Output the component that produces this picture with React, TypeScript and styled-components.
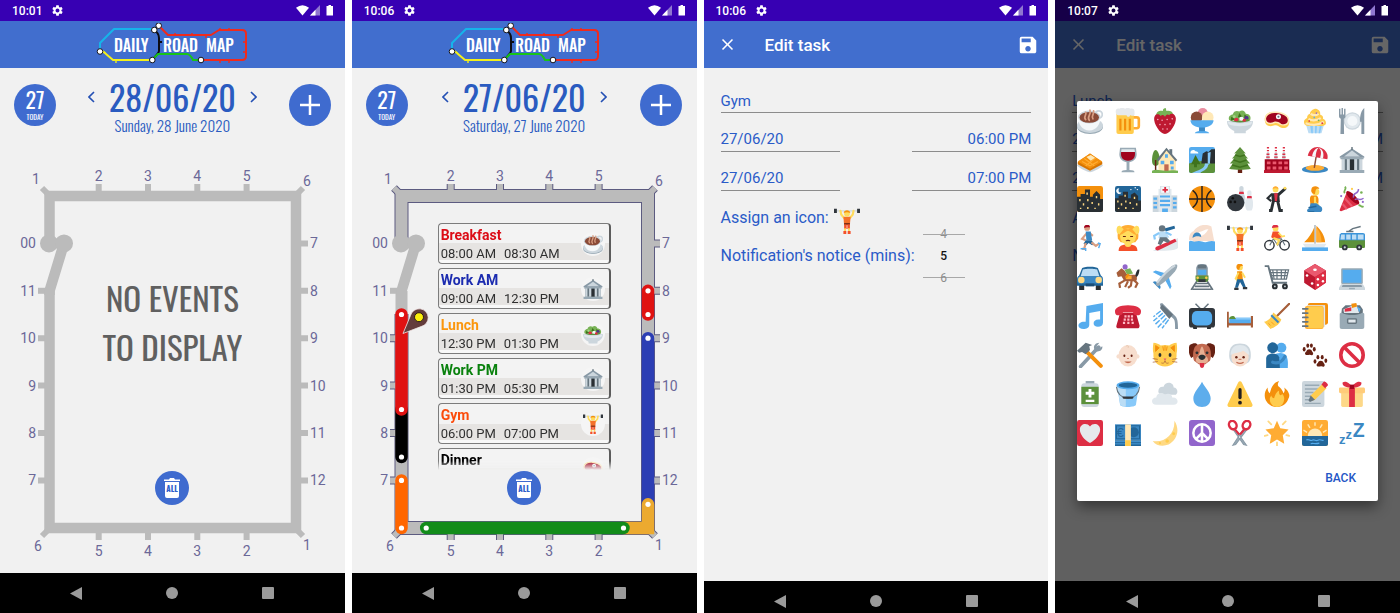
import React from 'react';
import styled, { createGlobalStyle } from 'styled-components';
import { MdSettings, MdSave, MdClose } from 'react-icons/md';

const GlobalStyle = createGlobalStyle`
  *, *::before, *::after { box-sizing: border-box; }
  body { margin: 0; background: #fff; font-family: Roboto, "Liberation Sans", sans-serif; }
  button { border: 0; padding: 0; margin: 0; background: none; font: inherit; color: inherit; cursor: pointer; }
  input { margin: 0; border-radius: 0; }
  svg { display: block; }
`;

const narrow = '"Oswald", "Roboto Condensed", "Liberation Sans Narrow", "Liberation Sans", sans-serif';

/* ---------- emoji drawings, all on a 36 unit square ---------- */

const art: Record<string, React.ReactNode> = {
  coffee: (
    <>
      <ellipse cx="18" cy="26" rx="18" ry="10" fill="#99AAB5" />
      <ellipse cx="18" cy="24.5" rx="18" ry="10" fill="#CCD6DD" />
      <circle cx="30" cy="9" r="5" fill="none" stroke="#CCD6DD" strokeWidth="2.5" />
      <path d="M2 12h30c1 10-5 19-15 19S1 22 2 12z" fill="#F5F8FA" />
      <ellipse cx="17" cy="12.5" rx="15.5" ry="9" fill="#CCD6DD" />
      <ellipse cx="17" cy="13" rx="13.5" ry="7.4" fill="#8A4B38" />
      <path d="M12 16c-4-4 2-6 0-10M17 17c-4-5 3-7 1-14M22 15c-3-4 2-6 1-11" fill="none" stroke="#D99E82" strokeWidth="2.4" strokeLinecap="round" />
    </>
  ),
  beer: (
    <>
      <path d="M25 13h5c3 0 3 2 3 3v9c0 2-1 3-3 3h-5" fill="none" stroke="#FFAC33" strokeWidth="3.6" />
      <path d="M2 6h24v27c0 2-1 3-3 3H5c-2 0-3-1-3-3z" fill="#FFCC4D" />
      <path d="M6 15h3v16H6zM12.500 15h3v16h-3zM19 15h3v16h-3z" fill="#F4900C" />
      <path d="M1 5c0-3 2-5 5-4 3-2 6-1 8 0 3-2 6-1 7 0 4-1 6 1 6 4v5c-3 2-5 0-6 0-1 3-4 3-5 0H4c-2 0-3-2-3-5z" fill="#E6E9EC" />
    </>
  ),
  strawberry: (
    <>
      <path d="M3 14C4 7 11 5 18 6c7-1 14 1 15 8 1 8-8 22-15 22S2 22 3 14z" fill="#BE1931" />
      <path d="M6 9c0-4 5-6 9-5 0-3 2-4 4-4l1 4c5-1 8 1 9 4-3 0-4 0-5 2-3-2-4-1-6 2-2-3-4-3-6-1-2-2-3-3-6-2z" fill="#77B255" />
      <g fill="#F4ABBA"><circle cx="8" cy="16" r="1.100" /><circle cx="14" cy="17" r="1.100" /><circle cx="21" cy="16" r="1.100" /><circle cx="28" cy="15" r="1.100" /><circle cx="11" cy="23" r="1.100" /><circle cx="18" cy="23" r="1.100" /><circle cx="25" cy="22" r="1.100" /><circle cx="15" cy="29" r="1.100" /><circle cx="21" cy="29" r="1.100" /></g>
    </>
  ),
  icecream: (
    <>
      <circle cx="19" cy="7" r="7" fill="#EA8DA0" />
      <circle cx="10.500" cy="13" r="8" fill="#8A4B38" />
      <circle cx="26" cy="13" r="8" fill="#FFE8B6" />
      <path d="M2 17h32c0 5-5 9-12 10v5c4 1 6 2 6 3H8c0-1 2-2 6-3v-5C7 26 2 22 2 17z" fill="#55ACEE" />
      <path d="M14 27h8v5h-8z" fill="#3B88C3" />
    </>
  ),
  salad: (
    <>
      <path d="M3 17C1 12 5 9 8 9c1-5 6-6 9-4 4-3 8-1 9 3 5 0 8 4 6 9z" fill="#77B255" />
      <path d="M6 12l6 4-7 2zM17 7l4 5-6 1zM24 9l5 3-5 2z" fill="#3E721D" />
      <circle cx="10" cy="12" r="2" fill="#A6D388" /><circle cx="27" cy="14" r="3" fill="#50318a" />
      <circle cx="13" cy="17" r="3" fill="#DD2E44" /><circle cx="20" cy="15" r="3" fill="#F5F8FA" /><circle cx="24" cy="18" r="2.500" fill="#DD2E44" />
      <path d="M0 18h36c0 7-4 11-10 14v3H10v-3C4 29 0 25 0 18z" fill="#CCD6DD" />
      <path d="M1 18c3 4 31 4 34 0 0 2-1 4-2 5-8 3-22 3-30 0-1-1-2-3-2-5z" fill="#E1E8ED" />
      <path d="M4 17c5 4 23 4 28 0l-5-2-4 3-8-1-4 1z" fill="#5C913B" />
      <circle cx="13" cy="16" r="2.600" fill="#DD2E44" /><circle cx="24" cy="17" r="2.200" fill="#DD2E44" />
    </>
  ),
  meat: (
    <>
      <path d="M1 16C1 8 8 4 17 6c8 1 18 4 18 13 0 8-6 10-12 8-3-2-5-4-8-3C7 27 1 24 1 16z" fill="#FFCC4D" />
      <path d="M1 15C2 7 9 4 17 5c9 1 18 4 18 12 0 7-6 8-11 7-4-2-6-4-9-3C7 24 1 22 1 15z" fill="#FFE8B6" />
      <path d="M3 14c1-5 7-8 14-7 8 1 16 4 16 10 0 5-5 6-9 5-4-3-7-4-10-3-6 3-12 1-11-5z" fill="#A0041E" />
      <circle cx="20" cy="12" r="3.500" fill="#F5F8FA" /><circle cx="20" cy="12" r="1.400" fill="#66757F" />
    </>
  ),
  cupcake: (
    <>
      <path d="M5 21h26l-4 14H9z" fill="#BDDDF4" />
      <path d="M11 22l2 13h2V22zM18 22v13h2l1-13zM25 22l-2 13h2l3-13z" fill="#88C9F9" />
      <path d="M3 21c-1-5 3-6 4-7 0-4 2-5 4-6 0-4 5-7 8-7 5 1 7 5 6 8 3 1 5 3 4 6 3 1 5 4 4 7-2 3-6 3-15 3S4 25 3 21z" fill="#FFCC4D" />
      <path d="M9 15c5 3 12 2 17-1M12 8c4 3 8 2 11 0M5 21c8 3 18 3 25-2" fill="none" stroke="#FFE8B6" strokeWidth="3" />
      <g><circle cx="10" cy="18" r="1.200" fill="#DD2E44" /><circle cx="17" cy="13" r="1.200" fill="#55ACEE" /><circle cx="23" cy="17" r="1.200" fill="#77B255" /><circle cx="20" cy="7" r="1.200" fill="#9266CC" /><circle cx="28" cy="21" r="1.200" fill="#DD2E44" /></g>
    </>
  ),
  plate: (
    <>
      <circle cx="18.500" cy="18" r="12" fill="#CCD6DD" /><circle cx="18.500" cy="18" r="10.500" fill="#E1E8ED" /><circle cx="18.500" cy="18" r="7" fill="#F5F8FA" />
      <path d="M0 1h2v8h1.500V0h2v9H7V1h2v10c0 2-1 3-2.300 4L7 36H2l.5-21C1 14 0 13 0 11zM35 0v36h-4V19h-2C29 10 31 3 35 0z" fill="#8899A6" />
    </>
  ),
  waffle: (
    <>
      <path d="M0 25l17-8 19 8c0 3-15 10-18 10S0 28 0 25z" fill="#CCD6DD" />
      <path d="M1 21L18 9l17 12v3L18 33 1 24z" fill="#D67503" />
      <path d="M1 20L18 9l17 11-17 10z" fill="#F4900C" />
      <path d="M7 20l11 6 11-6M10 16l14 10M26 15L12 26" fill="none" stroke="#FFAC33" strokeWidth="1.600" />
      <path d="M13 14l6-3 6 4-6 4z" fill="#FFE8B6" />
    </>
  ),
  wine: (
    <>
      <path d="M7 1h22l1 9c0 6-4 10-10 11v11c5 0 7 1 7 3H9c0-2 2-3 7-3V21C10 20 6 16 6 10z" fill="#99AAB5" />
      <path d="M9 3h18l.5 4h-19z" fill="#E1E8ED" />
      <path d="M8.500 7h19c1 7-2 12-9.500 12S7.500 14 8.500 7z" fill="#A0041E" />
    </>
  ),
  house: (
    <>
      <path d="M0 18c0-6 2-14 5-14s6 8 6 14-3 8-6 8-5-2-5-8z" fill="#5C913B" /><path d="M4 18h2v15H4z" fill="#662113" />
      <path d="M24 3h4v8h-4z" fill="#66757F" /><path d="M9 16L20 3l13 14v17H9z" fill="#FFE8B6" />
      <path d="M7 17L20 1l15 17-2 2L20 5 9 20z" fill="#66757F" />
      <path d="M18 10h4v5h-4zM12 19h5v5h-5zM25 19h5v5h-5zM26 27h4v4h-4z" fill="#55ACEE" /><path d="M17 24h6v10h-6z" fill="#C1694F" />
      <path d="M0 33c6-3 12 0 18 0s13-2 18 0v3H0z" fill="#77B255" />
    </>
  ),
  landscape: (
    <>
      <rect width="36" height="36" rx="3" fill="#55ACEE" /><path d="M0 23c10-5 26-4 36-2v12c0 2-1 3-3 3H3c-2 0-3-1-3-3z" fill="#5C913B" />
      <path d="M17 23l2-14 5-3 3 1 4-4h5v20H17z" fill="#292F33" /><path d="M26 8l4-1-1 16h-3z" fill="#88C9F9" />
      <path d="M2 7c1-3 5-4 7-1 3 0 4 2 4 3H2z" fill="#fff" /><path d="M9 11l-6 13h4v4h4v-4h5z" fill="#3E721D" />
      <path d="M22 23h8c-6 2-2 4-6 7-3 3-8 4-8 6H4c8-4 18-5 18-13z" fill="#88C9F9" />
    </>
  ),
  tree: (
    <>
      <path d="M15 28h6v8h-6z" fill="#662113" />
      <path d="M18 0l8 9h-3l6 7h-3l6 7h-4l5 7c-6 2-24 2-30 0l5-7H4l6-7H7l6-7h-3z" fill="#5C913B" />
      <path d="M11 11l7 2 7-2M9 18l9 3 9-3M7 25l11 3 11-3" fill="none" stroke="#3E721D" strokeWidth="2" />
    </>
  ),
  factory: (
    <>
      <path d="M4 7h3l1 13H3zM15 7h3l1 13h-5zM26 7h3l1 13h-5z" fill="#CCD6DD" />
      <path d="M4 0h3v2H4zM15 0h3v2h-3zM26 0h3v2h-3zM4 4h3v2H4zM15 4h3v2h-3zM26 4h3v2h-3zM3.500 9h4v2h-4zM14.500 9h4v2h-4zM25.500 9h4v2h-4zM3 13h5v2H3zM14 13h5v2h-5zM25 13h5v2h-5z" fill="#DD2E44" />
      <path d="M1 17h34v18H1z" fill="#A0041E" /><path d="M0 32h36v4H0z" fill="#BE1931" />
      <path d="M4 20h5v4H4zM12 20h5v4h-5zM20 20h5v4h-5zM28 20h5v4h-5zM4 27h5v4H4zM12 27h5v4h-5zM20 27h5v4h-5zM28 27h5v4h-5z" fill="#EA596E" />
    </>
  ),
  beach: (
    <>
      <ellipse cx="18" cy="31" rx="18" ry="5" fill="#3B88C3" /><ellipse cx="18" cy="29" rx="13" ry="4" fill="#FFAC33" />
      <path d="M20 11l-3 18" stroke="#8A4B38" strokeWidth="2" /><path d="M8 12C10 3 18-2 26 1c7 3 11 9 9 16z" fill="#DD2E44" />
      <path d="M14 13c1-7 5-12 9-12-3 3-4 8-4 13zM25 15c2-6 2-11-2-14 6 2 8 8 6 15z" fill="#F5F8FA" />
    </>
  ),
  bank: (
    <>
      <path d="M1 13L18 2l17 11v2H1z" fill="#8899A6" /><path d="M7 13l11-8 11 8z" fill="#CCD6DD" /><path d="M18 0v4" stroke="#66757F" strokeWidth="2" />
      <path d="M4 15h28v17H4z" fill="#66757F" /><path d="M14 17h8v15h-8z" fill="#292F33" />
      <path d="M4 16h4v16H4zM11 16h4v16h-4zM21 16h4v16h-4zM28 16h4v16h-4z" fill="#CCD6DD" /><path d="M2 15h32v2H2zM1 32h34v4H1z" fill="#99AAB5" />
    </>
  ),
  dusk: (
    <>
      <rect width="36" height="36" rx="3" fill="#F4900C" />
      <path d="M0 15h5v-4h6V5h7v10h4v-3l5-5 5 5v6h4v15c0 2-1 3-3 3H3c-2 0-3-1-3-3z" fill="#292F33" />
      <path d="M3 18h2v3H3zM13 9h2v3h-2zM8 24h2v3H8zM14 18h2v3h-2zM26 14h2v3h-2zM29 24h2v3h-2zM20 22h2v3h-2zM4 30h2v2H4zM24 30h2v2h-2zM14 29h2v3h-2z" fill="#FFD983" />
    </>
  ),
  night: (
    <>
      <rect width="36" height="36" rx="3" fill="#226699" />
      <path d="M0 17h5v-4h6V8h7v9h4v-5l5-3 5 5v6h4v13c0 2-1 3-3 3H3c-2 0-3-1-3-3z" fill="#292F33" />
      <path d="M3 20h2v3H3zM13 12h2v3h-2zM8 24h2v3H8zM14 20h2v3h-2zM26 15h2v3h-2zM29 24h2v3h-2zM20 22h2v3h-2zM4 30h2v2H4zM24 30h2v2h-2zM14 29h2v3h-2z" fill="#FFD983" />
      <path d="M6 3a4 4 0 1 0 3 6c-4 1-5-3-3-6z" fill="#F5F8FA" /><circle cx="22" cy="5" r="1" fill="#fff" /><circle cx="31" cy="5" r="1" fill="#fff" /><circle cx="28" cy="2.500" r="1" fill="#fff" />
    </>
  ),
  hospital: (
    <>
      <path d="M1 13h34v23H1z" fill="#CCD6DD" /><path d="M9 4h18v32H9z" fill="#E1E8ED" /><path d="M12 0h12v10H12z" fill="#F5F8FA" stroke="#CCD6DD" />
      <path d="M17 1.500h2.500V4H22v2.500h-2.500V9H17V6.500h-2.500V4H17z" fill="#DD2E44" />
      <path d="M11 13h14v3H11zM11 19h14v3H11zM11 25h14v3H11zM2 16h5v3H2zM2 22h5v3H2zM2 28h5v3H2zM29 16h5v3h-5zM29 22h5v3h-5zM29 28h5v3h-5zM14 31h8v5h-8z" fill="#55ACEE" />
    </>
  ),
  basketball: (
    <>
      <circle cx="18" cy="18" r="18" fill="#F4900C" />
      <path d="M18 0v36M0 18h36M5 6c9 7 9 17 0 24M31 6c-9 7-9 17 0 24" fill="none" stroke="#231F20" strokeWidth="2" />
    </>
  ),
  bowling: (
    <>
      <path d="M17 3c0-4 6-4 6 0s-1 5 1 9c3 6 1 14-1 16h-6c-2-2-3-10 0-16 1-4 0-5 0-9z" fill="#CCD6DD" /><path d="M17 8h6l.5 3h-7z" fill="#DD2E44" />
      <path d="M28 9c0-4 6-4 6 0s-1 5 1 9c2 5 1 14-1 16h-6c-3-2-4-11-1-16 2-4 1-5 1-9z" fill="#E1E8ED" /><path d="M28 14h6l.500 3h-7z" fill="#DD2E44" />
      <circle cx="12" cy="23" r="12" fill="#31373D" /><circle cx="8" cy="17" r="1.800" fill="#111" /><circle cx="5" cy="22" r="1.800" fill="#111" /><circle cx="11" cy="22" r="1.800" fill="#111" />
    </>
  ),
  dancer: (
    <>
      <circle cx="16" cy="5" r="4" fill="#FFDC5D" /><path d="M12 4c0-5 8-5 8 0-3-1-5-1-8 0z" fill="#FFAC33" />
      <path d="M20 12l9-8" stroke="#292F33" strokeWidth="4" strokeLinecap="round" /><circle cx="29" cy="3" r="2" fill="#FFDC5D" />
      <path d="M10 10h11l1 12H11z" fill="#292F33" /><path d="M14 10h5l-1 11h-3z" fill="#DD2E44" />
      <path d="M11 11l-6 6 5 4" fill="none" stroke="#292F33" strokeWidth="3" /><path d="M13 21l-3 13H7M19 21l3 13h4" fill="none" stroke="#292F33" strokeWidth="4" />
    </>
  ),
  kneel: (
    <>
      <circle cx="19" cy="8" r="5" fill="#FFDC5D" /><path d="M13 5c0-6 10-6 11-1-5-1-5 1-6 7-4 0-6-3-5-6z" fill="#F4900C" />
      <path d="M13 13h7c4 2 3 9 2 14H12c-1-6-2-12 1-14z" fill="#F4900C" /><path d="M18 15v8l5 4" fill="none" stroke="#FFDC5D" strokeWidth="3" />
      <path d="M12 24h8l7 5c2 3 1 7-2 7H10c-4 0-4-4 0-5z" fill="#3B88C3" /><path d="M9 30l11-2M9 36h8" stroke="#226699" strokeWidth="2" />
    </>
  ),
  party: (
    <>
      <path d="M11 8l17 17L3 35c-2 0-2-1-2-2z" fill="#DD2E44" /><path d="M8 17l10 11M5 25l6 7" stroke="#EA596E" strokeWidth="3" /><ellipse cx="19" cy="16" rx="4" ry="12" transform="rotate(-45 19 16)" fill="#A0041E" />
      <path d="M8 1c4 3-3 5 0 9" fill="none" stroke="#77B255" strokeWidth="2.400" /><path d="M20 16c-1-9 7-3 7-12M22 19c5-4 5 3 12-2" fill="none" stroke="#9266CC" strokeWidth="2" /><path d="M27 27c3-2 3 4 7 1" fill="none" stroke="#77B255" strokeWidth="2.400" />
      <circle cx="18" cy="4" r="1.500" fill="#FFCC4D" /><circle cx="31" cy="9" r="1.800" fill="#77B255" /><circle cx="33" cy="22" r="1.500" fill="#9266CC" /><circle cx="3" cy="14" r="1.500" fill="#9266CC" />
    </>
  ),
  run: (
    <>
      <circle cx="14" cy="4" r="4" fill="#D99E82" /><path d="M10 4c-1-5 8-6 8-1-3 0-5 0-8 1z" fill="#A0041E" />
      <path d="M13 12l-6 7 5 2" fill="none" stroke="#D99E82" strokeWidth="3" /><path d="M17 11l5 4" stroke="#D99E82" strokeWidth="3" />
      <path d="M12 9h7l2 12h-8z" fill="#3B88C3" /><path d="M12 21h8l4 5-3 2-5-3-3 3-4-2z" fill="#226699" />
      <path d="M20 24l6 5 4-3M12 25l-2 8H7" fill="none" stroke="#D99E82" strokeWidth="3" /><path d="M29 25l3 1-2 6M5 33h7v3" fill="none" stroke="#55ACEE" strokeWidth="2" />
    </>
  ),
  massage: (
    <>
      <path d="M4 19c-2-12 3-19 14-19s16 7 14 19l-4 5H8z" fill="#FFAC33" />
      <path d="M5 36c0-7 4-9 13-9s13 2 13 9z" fill="#F4502A" /><path d="M14 22h8v7c-2 2-6 2-8 0z" fill="#FFDC5D" />
      <ellipse cx="18" cy="16" rx="11" ry="11" fill="#FFDC5D" /><path d="M7 14C7 6 12 4 18 6c6-2 11 0 11 8-5-2-7-5-11-6-4 1-6 4-11 6z" fill="#FFAC33" />
      <path d="M3 11C1 5 3 0 7 1l5 5-6 7zM33 11c2-6 0-11-4-10l-5 5 6 7z" fill="#FFDC5D" />
      <path d="M11 16h4M21 16h4M15 22c2-1 4-1 6 0" fill="none" stroke="#662113" strokeWidth="1.500" />
    </>
  ),
  snowboard: (
    <>
      <path d="M1 36L36 18v14c-4 4-20 4-35 4z" fill="#E1E8ED" /><path d="M6 30L32 19l2 4L9 35c-4 1-6-3-3-5z" fill="#DD2E44" />
      <path d="M17 5l14-4 1 4-13 4z" fill="#226699" /><circle cx="14" cy="5" r="4.500" fill="#66757F" />
      <path d="M10 9h9l5 8-7 3-8-2z" fill="#BBDDF5" /><path d="M11 17l9 0 5 5-3 3-6-3-4 6-4-2z" fill="#66757F" /><path d="M10 11l-7 4 1 5M19 10l8 4" fill="none" stroke="#88C9F9" strokeWidth="3" />
    </>
  ),
  swim: (
    <>
      <path d="M0 21c0-7 2-11 6-12 5-8 15-12 25-7l4 21z" fill="#F7DECE" /><path d="M13 10c6-1 9-4 14-4-3 4-5 8-10 9z" fill="#fff" />
      <circle cx="11" cy="18" r="7" fill="#F7DECE" /><path d="M5 18c0-10 12-10 12-1-3-2-9-2-12 1z" fill="#3B88C3" /><path d="M0 23c3-3 6 1 9 0s6-1 9 0 6 1 9 0 6-1 9 0v13H0z" fill="#55ACEE" />
    </>
  ),
  lifter: (
    <>
      <path d="M3 4h30" stroke="#CCD6DD" strokeWidth="1.600" /><path d="M0 1h4v6H0zM32 1h4v6h-4z" fill="#31373D" />
      <path d="M9 4l1 5 4 5M27 4l-1 5-4 5" fill="none" stroke="#FFDC5D" strokeWidth="3" strokeLinecap="round" />
      <path d="M13 12h10l-1 12h-8z" fill="#F4702A" /><circle cx="18" cy="8" r="4" fill="#FFDC5D" /><path d="M13.500 7c0-5 9-5 9 0-3-1.500-6-1.500-9 0z" fill="#F4900C" />
      <path d="M14 21h8v2h-8z" fill="#662113" /><path d="M14 23h3.500v6H14zM18.500 23H22v6h-3.500z" fill="#F4502A" /><path d="M14 28h2.600v4H14zM19.400 28H22v4h-2.600z" fill="#FFDC5D" /><path d="M13 32h4v4h-4zM19 32h4v4h-4z" fill="#F4502A" />
    </>
  ),
  cyclist: (
    <>
      <circle cx="7.500" cy="28" r="6.500" fill="none" stroke="#31373D" strokeWidth="2" /><circle cx="28.500" cy="28" r="6.500" fill="none" stroke="#31373D" strokeWidth="2" />
      <path d="M8 28l5-9h11l5 9M13 19l6 9 5-9" fill="none" stroke="#66757F" strokeWidth="1.600" /><circle cx="16" cy="5" r="4" fill="#FFDC5D" /><path d="M11 4c0-6 9-6 9-1z" fill="#DD2E44" />
      <path d="M12 9h8l5 8-10 3-5-3z" fill="#F4502A" /><path d="M20 11l5 5 4-1" fill="none" stroke="#FFDC5D" strokeWidth="2.500" /><path d="M13 18l8 3-3 7" fill="none" stroke="#FFDC5D" strokeWidth="3" />
    </>
  ),
  sail: (
    <>
      <path d="M18 0v26" stroke="#8899A6" strokeWidth="1.500" /><path d="M17 3v21H3C10 17 14 11 17 3zM20 1c6 6 12 14 12 23H20z" fill="#F4900C" /><path d="M20 3c5 6 7 13 7 21h-7z" fill="#FFAC33" />
      <path d="M1 26h33l-4 6H5z" fill="#E1E8ED" /><path d="M0 31h36v5H0z" fill="#55ACEE" />
    </>
  ),
  trolley: (
    <>
      <path d="M13 9l6-4 11-3M10 9h10" fill="none" stroke="#66757F" strokeWidth="2" /><path d="M3 11h30c2 0 3 1 3 3v8H0l1-9z" fill="#3B94D9" /><path d="M3 13h5v7H2zM10 13h6v7h-6zM18 13h6v7h-6zM26 13h8v7h-8z" fill="#BDDDF4" />
      <path d="M0 21h36v9c0 1-1 2-2 2H2c-1 0-2-1-2-2z" fill="#5C913B" /><circle cx="8" cy="31" r="4" fill="#31373D" /><circle cx="28" cy="31" r="4" fill="#31373D" /><circle cx="8" cy="31" r="1.500" fill="#ccd6dd" /><circle cx="28" cy="31" r="1.500" fill="#ccd6dd" />
    </>
  ),
  car: (
    <>
      <path d="M3 28h7v8H3zM26 28h7v8h-7z" fill="#292F33" /><path d="M7 6c1-3 21-3 22 0l4 10c4 2 3 8 3 14H0c0-6-1-12 3-14z" fill="#226699" />
      <path d="M8 8c1-2 19-2 20 0l3 9H5z" fill="#BBDDF5" /><path d="M3 17h30c3 1 3 6 2 10H1c-1-4-1-9 2-10z" fill="#3B88C3" />
      <circle cx="6" cy="22" r="4.500" fill="#FFD983" /><circle cx="30" cy="22" r="4.500" fill="#FFD983" /><path d="M12 27h12v4H12z" fill="#1b4d75" />
    </>
  ),
  horse: (
    <>
      <path d="M2 12l7-6 4 3 4 6h9c4 0 5 3 4 8l-5 1H13l-4-7-5 1z" fill="#A65E3A" /><path d="M28 16c2-7 3-9 6-8-1 3 0 6-4 10z" fill="#292F33" />
      <path d="M13 23l-7 4 1 6M18 24l-4 8M26 22l5 5-3 6M23 23l-1 7-4 3" fill="none" stroke="#A65E3A" strokeWidth="3" /><path d="M15 16h8v5h-8z" fill="#FFAC33" />
      <path d="M13 8l8-2 4 7-8 2z" fill="#77B255" /><circle cx="14" cy="4" r="3.500" fill="#9266CC" /><path d="M19 14l-4 5" stroke="#F4900C" strokeWidth="3" />
    </>
  ),
  plane: (
    <>
      <path d="M1 11l4-2 17 5 5 1-9 5zM25 35l2-4-5-17-1-5-5 9z" fill="#55ACEE" /><path d="M1 25l3-1 6 2 2 6-1 3-5-5z" fill="#3B88C3" />
      <path d="M5 28C9 20 20 9 27 3c5-3 8-3 8-1s0 4-3 8C26 17 15 28 8 31z" fill="#99AAB5" /><path d="M7 26C13 18 22 8 32 2" stroke="#CCD6DD" strokeWidth="3" fill="none" />
    </>
  ),
  train: (
    <>
      <path d="M12 22L3 36M24 22l9 14M10 27h16M8 31h20M5 35h26" fill="none" stroke="#66757F" strokeWidth="2.400" />
      <path d="M10 6c0-8 16-8 16 0v12H10z" fill="#8899A6" /><path d="M12 1h12v5H12z" fill="#66757F" /><path d="M12 8h12v7H12z" fill="#55ACEE" />
      <path d="M9 16h18v5c0 3-3 4-5 4h-8c-2 0-5-1-5-4z" fill="#5C913B" /><path d="M13 21h10v4H13z" fill="#31373D" />
      <circle cx="12" cy="19" r="1.800" fill="#FFCC4D" /><circle cx="24" cy="19" r="1.800" fill="#FFCC4D" />
    </>
  ),
  walk: (
    <>
      <circle cx="18" cy="5" r="4" fill="#FFDC5D" /><path d="M13 4c0-6 9-6 9-1-4-1-4 1-5 5-3 0-4-2-4-4z" fill="#F4900C" /><path d="M14 10h7l1 12h-8z" fill="#F4900C" />
      <path d="M16 12l-4 8 3 3M21 12l4 7" fill="none" stroke="#FFDC5D" strokeWidth="2.600" /><path d="M14 21h8l4 11h-4l-4-7-3 8h-4z" fill="#226699" /><path d="M10 33h6v3h-6zM22 32h6v3h-6z" fill="#31373D" />
    </>
  ),
  cart: (
    <>
      <path d="M1 3h5l6 23h20" fill="none" stroke="#66757F" strokeWidth="2.600" /><path d="M8 8h26l-3 13H12zM12 8l2 13M18 8v13M24 8v13M30 8l-2 13M9 12h24M10 16h22" fill="none" stroke="#66757F" strokeWidth="1.700" />
      <circle cx="15" cy="31" r="4" fill="#292F33" /><circle cx="29" cy="31" r="4" fill="#292F33" /><circle cx="15" cy="31" r="1.300" fill="#ccd6dd" /><circle cx="29" cy="31" r="1.300" fill="#ccd6dd" />
    </>
  ),
  die: (
    <>
      <path d="M18 0l15 9v17L18 36 3 26V9z" fill="#BE1931" /><path d="M18 0l15 9-15 9L3 9z" fill="#EA596E" /><path d="M18 18v18l15-10V9z" fill="#DD2E44" />
      <g fill="#fff"><ellipse cx="18" cy="8" rx="2.500" ry="1.700" /><circle cx="7" cy="16" r="1.800" /><circle cx="14" cy="27" r="1.800" /><circle cx="22" cy="21" r="1.700" /><circle cx="29" cy="16" r="1.700" /><circle cx="22" cy="29" r="1.700" /><circle cx="29" cy="24" r="1.700" /></g>
    </>
  ),
  laptop: (
    <>
      <rect x="3" y="6" width="30" height="22" rx="2" fill="#99AAB5" /><path d="M5 8h26v18H5z" fill="#55ACEE" /><path d="M3 28h30l3 5v3H0v-3z" fill="#CCD6DD" /><path d="M5 29h26l1 3H4z" fill="#8899A6" /><path d="M14 33h8v2h-8z" fill="#99AAB5" />
    </>
  ),
  music: <path d="M13 4l23-4v27c0 4-3 6-7 6s-6-2-6-5 3-6 9-5V11l-15 3v16c0 4-4 6-8 6s-7-2-7-5 4-6 10-5z" fill="#55ACEE" />,
  phone: (
    <>
      <path d="M7 14h22l5 17c0 3-1 4-3 4H5c-2 0-4-1-3-4z" fill="#BE1931" /><path d="M0 11c0-4 6-8 18-8s18 4 18 8c0 5-2 6-5 6s-6-1-6-4H11c0 3-3 4-6 4s-5-1-5-6z" fill="#DD2E44" />
      <g fill="#FFB9C3"><path d="M13 17h3v3h-3zM17.500 17h3v3h-3zM22 17h3v3h-3zM12 21.500h3v3h-3zM17 21.500h3v3h-3zM22 21.500h3v3h-3zM11 26h3v3h-3zM17 26h3v3h-3zM23 26h3v3h-3z" /></g>
    </>
  ),
  shower: (
    <>
      <path d="M11 1l3-1 18 18c3 3 4 7 4 18h-4c0-8 0-13-3-15L12 6z" fill="#8899A6" /><path d="M14 2l15 14-5 6L11 7z" fill="#66757F" />
      <path d="M12 11l-10 8M15 14L2 25M18 17L4 30M20 21L8 34M23 23l-9 12" stroke="#55ACEE" strokeWidth="2" strokeDasharray="8 2" />
    </>
  ),
  tv: (
    <>
      <path d="M9 1l9 9 9-9" fill="none" stroke="#66757F" strokeWidth="2" /><path d="M5 32h6v4H6zM25 32h6l-1 4h-5z" fill="#292F33" /><rect y="7" width="36" height="27" rx="4" fill="#31373D" /><rect x="4" y="11" width="28" height="20" rx="7" fill="#55ACEE" />
    </>
  ),
  bed: (
    <>
      <path d="M0 12h2.500v22H0zM33 18h3v16h-3zM2 27h32v4H2z" fill="#A65E3A" /><path d="M3 21h30v7H3z" fill="#55ACEE" /><path d="M3 22c0-5 8-5 8-2l3 2z" fill="#5C913B" /><path d="M12 20h21v3H12z" fill="#88C9F9" />
    </>
  ),
  broom: (
    <>
      <path d="M35 1L18 18" stroke="#A65E3A" strokeWidth="3" strokeLinecap="round" /><path d="M13 13l11 10c-3 8-10 11-15 13L0 26c8-2 10-7 13-13z" fill="#FFCC4D" /><path d="M9 18l10 10 2-2L11 16z" fill="#3B88C3" /><path d="M6 28l3 3M10 26l4 4" stroke="#F4900C" />
    </>
  ),
  notebook: (
    <>
      <rect x="8" y="0" width="28" height="30" rx="3" fill="#F4900C" /><path d="M8 3h24v30H8z" fill="#E1E8ED" /><rect x="4" y="4" width="26" height="32" rx="3" fill="#FFAC33" /><rect x="7" y="5" width="22" height="30" rx="2" fill="#FFCC4D" />
      <path d="M1 8h7M1 14h7M1 20h7M1 26h7M1 32h7" stroke="#66757F" strokeWidth="2.400" strokeLinecap="round" />
    </>
  ),
  cardbox: (
    <>
      <path d="M4 8L9 3h20l4 6v8H3z" fill="#66757F" /><path d="M6 9l18-8 4 13H7z" fill="#E1E8ED" /><path d="M17 1l7-1 1 5-7 2z" fill="#F4900C" /><path d="M8 8l9-2v5l-9 1z" fill="#DD2E44" /><path d="M25 5l5 3-2 5z" fill="#55ACEE" />
      <path d="M1 15l2-2c9 5 21 5 30 0l2 2v18c0 2-1 3-3 3H4c-2 0-3-1-3-3z" fill="#99AAB5" /><rect x="11" y="21" width="14" height="8" rx="2" fill="#66757F" /><rect x="13" y="23" width="10" height="4" fill="#E1E8ED" />
    </>
  ),
  tools: (
    <>
      <path d="M5 34L30 7" stroke="#8899A6" strokeWidth="5" strokeLinecap="round" /><path d="M24 10c-2-5 2-9 7-9l-4 5 3 3 5-3c1 5-4 8-8 7z" fill="#8899A6" />
      <path d="M14 14l19 19" stroke="#F4900C" strokeWidth="5.500" strokeLinecap="round" /><path d="M0 12L12 1l9 3-4 2 1 5-6 6-5-3-4 1z" fill="#66757F" />
    </>
  ),
  baby: (
    <>
      <circle cx="5" cy="20" r="3" fill="#F7DECE" /><circle cx="31" cy="20" r="3" fill="#F7DECE" /><ellipse cx="18" cy="19" rx="13" ry="15" fill="#F7DECE" />
      <path d="M15 6c2-2 5 0 3 2" fill="none" stroke="#E6C2A8" strokeWidth="1.200" /><ellipse cx="13" cy="19" rx="1.400" ry="1.800" fill="#662113" /><ellipse cx="23" cy="19" rx="1.400" ry="1.800" fill="#662113" /><path d="M13 27c3 3 7 3 10 0z" fill="#C1694F" /><path d="M17 23h2" stroke="#C1694F" strokeWidth="1.400" />
    </>
  ),
  cat: (
    <>
      <path d="M2 1c4 0 8 2 10 4 4-1 8-1 12 0 2-2 6-4 10-4 1 6 1 11 0 15 1 11-6 18-16 18S1 27 2 16C1 12 1 7 2 1z" fill="#FFCC4D" />
      <path d="M5 5l5 3-5 5zM31 5l-5 3 5 5zM15 6l1 6M18 5v7M21 6l-1 6" fill="#F4900C" stroke="#F4900C" strokeWidth="1.300" /><ellipse cx="11" cy="18" rx="2" ry="2.600" fill="#292F33" /><ellipse cx="25" cy="18" rx="2" ry="2.600" fill="#292F33" />
      <path d="M16 23h4l-2 3z" fill="#E75A70" /><path d="M13 29c2 1 5 0 5-3 0 3 3 4 5 3M1 23l7 1M1 28l7-1M35 23l-7 1M35 28l-7-1" fill="none" stroke="#A65E3A" />
    </>
  ),
  dog: (
    <>
      <path d="M1 4c5-3 10-3 11 0l-3 14-6 4C-1 17-1 8 1 4zM35 4c-5-3-10-3-11 0l3 14 6 4c4-5 4-14 2-18z" fill="#662113" />
      <path d="M8 7c5-6 15-6 20 0 3 6 3 14 1 19l-7 5h-8l-7-5C5 21 5 13 8 7z" fill="#C1694F" /><path d="M18 6c4 5 2 10 6 14 5 5 2 10-6 10s-11-5-6-10c4-4 2-9 6-14z" fill="#E6AF93" />
      <circle cx="11" cy="15" r="2" fill="#292F33" /><circle cx="25" cy="15" r="2" fill="#292F33" /><path d="M13 20c2-3 8-3 10 0 0 3-3 5-5 5s-5-2-5-5z" fill="#292F33" /><path d="M15 29h6v4c-1 4-5 4-6 0z" fill="#DD2E44" />
    </>
  ),
  elder: (
    <>
      <path d="M3 18C3 6 9 2 18 2s15 4 15 16c0 8-3 11-7 12H10c-4-1-7-4-7-12z" fill="#CCD6DD" /><ellipse cx="18" cy="21" rx="12" ry="13" fill="#F7DECE" />
      <path d="M5 18C5 8 11 4 18 4s13 4 13 14c-3-1-4-4-9-6-4 3-11 2-17 6z" fill="#E1E8ED" /><circle cx="13" cy="21" r="1.700" fill="#662113" /><circle cx="23" cy="21" r="1.700" fill="#662113" /><path d="M13 28c3 2 7 2 10 0" fill="none" stroke="#C1694F" strokeWidth="1.600" /><path d="M16 24h4" stroke="#C1694F" strokeWidth="1.300" />
    </>
  ),
  hug: (
    <>
      <circle cx="24" cy="8" r="7" fill="#55ACEE" /><path d="M14 18c4-4 14-4 17 1 3 7 2 12 2 17H14z" fill="#55ACEE" /><circle cx="12" cy="8" r="7.500" fill="#226699" /><path d="M3 22c1-8 16-8 18-1l1 15H3z" fill="#226699" />
      <path d="M12 28c8 3 14-2 17-8" fill="none" stroke="#3B88C3" strokeWidth="4.500" strokeLinecap="round" />
    </>
  ),
  paws: (
    <g fill="#662113">
      <path d="M6 13c1-4 7-4 8 0 3 3 1 6-2 5-2-1-3 0-5 0-3 0-4-3-1-5z" /><ellipse cx="3" cy="10" rx="2" ry="3" /><ellipse cx="8" cy="5" rx="2" ry="3" /><ellipse cx="13" cy="5" rx="2" ry="3" /><ellipse cx="17" cy="10" rx="2" ry="3" />
      <path d="M22 29c1-4 7-4 8 0 3 3 1 6-2 5-2-1-3 0-5 0-3 0-4-3-1-5z" /><ellipse cx="18" cy="27" rx="2" ry="3" /><ellipse cx="22" cy="21" rx="2" ry="3" /><ellipse cx="28" cy="21" rx="2" ry="3" /><ellipse cx="33" cy="26" rx="2" ry="3" />
    </g>
  ),
  forbidden: (
    <>
      <circle cx="18" cy="18" r="15.500" fill="#fff" stroke="#DD2E44" strokeWidth="5" /><path d="M7 7l22 22" stroke="#DD2E44" strokeWidth="5" />
    </>
  ),
  battery: (
    <>
      <path d="M12 0h12v5H12z" fill="#99AAB5" /><rect x="6" y="3" width="24" height="33" rx="4" fill="#CCD6DD" /><path d="M6 8h24v24H6z" fill="#5C913B" /><path d="M16 11h4v4h4v4h-4v4h-4v-4h-4v-4h4zM12 26h12v3H12z" fill="#fff" />
    </>
  ),
  bucket: (
    <>
      <path d="M3 7h30l-4 26c-1 4-21 4-22 0z" fill="#88C9F9" /><path d="M3 7h12v28c-5 0-8-1-8-3z" fill="#BBDDF5" /><ellipse cx="18" cy="6" rx="16" ry="5.500" fill="#55ACEE" /><ellipse cx="18" cy="6" rx="13" ry="3.500" fill="#226699" /><path d="M2 8c1 10 6 15 16 16 10-1 15-6 16-16" fill="none" stroke="#66757F" strokeWidth="1.600" /><path d="M12 23h12" stroke="#31373D" strokeWidth="3" strokeLinecap="round" />
    </>
  ),
  cloud: (
    <>
      <path d="M9 16c-1-5 2-9 7-8 2-8 14-7 14 1 5 0 7 7 3 10H12z" fill="#CCD6DD" /><path d="M6 33c-8 0-8-10 0-10 0-6 8-9 12-4 5-3 10 0 10 4 9-1 10 10 2 10z" fill="#E1E8ED" />
    </>
  ),
  drop: <path d="M18 1c4 8 12 15 12 23S25 36 18 36 6 32 6 24 14 9 18 1z" fill="#5DADEC" />,
  warning: (
    <>
      <path d="M15.500 2c1-2 4-2 5 0L35 32c1 2 0 4-2 4H3c-2 0-3-2-2-4z" fill="#FFCC4D" /><path d="M18 12v11" stroke="#231F20" strokeWidth="4.500" strokeLinecap="round" /><circle cx="18" cy="30" r="2.600" fill="#231F20" />
    </>
  ),
  fire: (
    <>
      <path d="M35 19c0 2 0 3-1 5C32 31 26 36 18 36 9 36 1 29 1 20c0-4 1-7 4-11 0 4 1 6 3 8 2-8 5-15 13-17-3 5-2 7 1 9 3 3 4 5 5 8 2-3 2-5 1-8 4 3 6 6 7 10z" fill="#F4900C" /><path d="M28 24c0 7-4 12-10 12S8 31 8 25c0-2 1-3 2-5 1 3 2 3 4 4 1-5 3-9 7-11-1 7 3 8 4 5 2 1 3 4 3 6z" fill="#FFCC4D" />
    </>
  ),
  memo: (
    <>
      <rect x="0" y="0" width="31" height="36" rx="3" fill="#CCD6DD" /><path d="M4 6h20M4 11h18M4 16h12M4 21h10M4 26h8M4 31h22" stroke="#99AAB5" strokeWidth="2" /><path d="M12 20L28 4l6 6-16 16-7 2z" fill="#FFCC4D" /><path d="M27 5l3-4c2-1 6 3 6 5l-4 4z" fill="#DD2E44" /><path d="M12 20l6 6-7 3-2-2z" fill="#66757F" />
    </>
  ),
  gift: (
    <>
      <path d="M3 15h30v19c0 1-1 2-2 2H5c-1 0-2-1-2-2z" fill="#FDD888" /><path d="M0 11c0-2 1-2 2-2h32c1 0 2 1 2 2v4c0 2-1 2-2 2H2c-1 0-2-1-2-2z" fill="#FFCC7A" /><path d="M14 9h8v27h-8z" fill="#DD2E44" />
      <path d="M18 9C12 9 4 8 5 2c4-3 11 1 13 7 2-6 9-10 13-7 1 6-7 7-13 7z" fill="#DD2E44" /><path d="M15 5h6v6h-6z" fill="#A0041E" />
    </>
  ),
  heart: (
    <>
      <rect width="36" height="36" rx="3" fill="#DD2E44" /><path d="M18 32C10 27 4 20 4 13c0-8 10-10 14-4 4-6 14-4 14 4 0 7-6 14-14 19z" fill="#E6E9EC" />
    </>
  ),
  money: (
    <>
      <path d="M0 28h36v8H0z" fill="#226699" /><path d="M0 30h36M0 33h36" stroke="#55ACEE" /><path d="M0 6h36v22H0z" fill="#3B88C3" /><path d="M2 8h32v18H2z" fill="none" stroke="#226699" strokeWidth="1.500" />
      <circle cx="26" cy="17" r="7" fill="#226699" /><text x="2" y="23" fontFamily="Liberation Sans, sans-serif" fontSize="18" fill="#226699">€</text><path d="M14 6h8v30h-8z" fill="#FFE8B6" /><path d="M14 28h8v8h-8z" fill="#FFCC4D" />
    </>
  ),
  moon: (
    <>
      <path d="M31 1c8 12 4 27-8 33C15 37 6 36 1 29c16 3 31-9 30-28z" fill="#FFD983" /><circle cx="30" cy="19" r="2" fill="#FFCC4D" /><circle cx="21" cy="29" r="2.500" fill="#FFCC4D" /><circle cx="11" cy="32" r="1.500" fill="#FFCC4D" />
    </>
  ),
  peace: (
    <>
      <rect width="36" height="36" rx="4" fill="#9266CC" /><circle cx="18" cy="18" r="12" fill="none" stroke="#fff" strokeWidth="3.500" /><path d="M18 6v24M18 18l-8.500 8.500M18 18l8.500 8.500" stroke="#fff" strokeWidth="3.500" />
    </>
  ),
  scissors: (
    <>
      <path d="M11 12l16 23-4-1L9 14zM23 12L8 35l4-1 15-20z" fill="#99AAB5" stroke="#8899A6" strokeWidth="1.400" /><ellipse cx="8" cy="7" rx="5" ry="6" transform="rotate(-30 8 7)" fill="none" stroke="#DD2E44" strokeWidth="3.400" /><ellipse cx="27" cy="7" rx="5" ry="6" transform="rotate(30 27 7)" fill="none" stroke="#DD2E44" strokeWidth="3.400" /><path d="M11 13l6 7M24 13l-6 7" stroke="#DD2E44" strokeWidth="3" />
    </>
  ),
  star: (
    <>
      <path d="M18 1l4.500 10.500L34 13l-8 8 2 12-10-6-10 6 2-12-8-8 11.500-1.500z" fill="#FFAC33" /><path d="M6 2l4 4M30 2l-4 4M1 22l4-1M35 22l-4-1M18 31v5" stroke="#FFD983" strokeWidth="2.500" strokeLinecap="round" />
    </>
  ),
  sunrise: (
    <>
      <rect width="36" height="36" rx="3" fill="#FFAC33" /><path d="M18 3v5M8 6l3 5M28 6l-3 5M2 14l5 3M34 14l-5 3" stroke="#FFE8B6" strokeWidth="2" /><path d="M8 23c0-15 20-15 20 0z" fill="#FFE8B6" /><path d="M0 22h36v11c0 2-1 3-3 3H3c-2 0-3-1-3-3z" fill="#226699" /><path d="M6 28c3-3 5 2 8 0s5 2 8 0 5 1 8 0M12 33c3-2 5 1 12-1" fill="none" stroke="#55ACEE" strokeWidth="1.500" />
    </>
  ),
  sleep: (
    <g fill="#3B88C3" fontFamily="Liberation Sans, sans-serif" fontWeight="700">
      <text x="0" y="33" fontSize="18">z</text><text x="9" y="26" fontSize="18">z</text><text x="19" y="23" fontSize="27">Z</text>
    </g>
  ),
};

const pickerIcons = [
  'coffee', 'beer', 'strawberry', 'icecream', 'salad', 'meat', 'cupcake', 'plate',
  'waffle', 'wine', 'house', 'landscape', 'tree', 'factory', 'beach', 'bank',
  'dusk', 'night', 'hospital', 'basketball', 'bowling', 'dancer', 'kneel', 'party',
  'run', 'massage', 'snowboard', 'swim', 'lifter', 'cyclist', 'sail', 'trolley',
  'car', 'horse', 'plane', 'train', 'walk', 'cart', 'die', 'laptop',
  'music', 'phone', 'shower', 'tv', 'bed', 'broom', 'notebook', 'cardbox',
  'tools', 'baby', 'cat', 'dog', 'elder', 'hug', 'paws', 'forbidden',
  'battery', 'bucket', 'cloud', 'drop', 'warning', 'fire', 'memo', 'gift',
  'heart', 'money', 'moon', 'peace', 'scissors', 'star', 'sunrise', 'sleep',
];

const Emoji = ({ name, size }: { name: string; size: number }) => (
  <svg width={size} height={size} viewBox="0 0 36 36" aria-hidden="true">{art[name]}</svg>
);

/* ---------- phone frame ---------- */

const Page = styled.main`
  display: grid;
  grid-template-columns: repeat(4, minmax(0, 1fr));
  gap: 7px;
  min-height: 100vh;
`;
const Screen = styled.section`
  position: relative;
  display: flex;
  flex-direction: column;
  overflow: hidden;
  background: #f1f1f1;
`;
const StatusBar = styled.div<{ $dim?: boolean }>`
  display: flex;
  align-items: center;
  justify-content: space-between;
  height: 21px;
  padding: 0 12px;
  color: #fff;
  background: ${(p) => (p.$dim ? '#160048' : '#3700b3')};
  font-size: 12px;
  font-weight: 500;
  line-height: 20px;
`;
const StatusGroup = styled.div`
  display: flex;
  align-items: center;
  gap: 9px;
`;
const AppBar = styled.header<{ $centered?: boolean }>`
  display: flex;
  align-items: center;
  justify-content: ${(p) => (p.$centered ? 'center' : 'flex-start')};
  height: 47px;
  padding: ${(p) => (p.$centered ? '0' : '0 9px 0 14px')};
  color: #fff;
  background: #416ece;
`;
const Body = styled.div`
  flex: 1;
  display: flex;
  flex-direction: column;
`;
const NavBar = styled.nav<{ $short?: boolean }>`
  display: flex;
  justify-content: center;
  gap: 84px;
  height: ${(p) => (p.$short ? '32px' : '40px')};
  padding-top: 14px;
  background: #000;
`;
const NavButton = styled.button`
  width: 12px;
  height: 12px;
`;

const Status = ({ time, dim }: { time: string; dim?: boolean }) => (
  <StatusBar $dim={dim}>
    <StatusGroup>
      {time}
      <MdSettings size={13} />
    </StatusGroup>
    <svg width="37" height="11" viewBox="0 0 37 11" aria-hidden="true">
      <path d="M0 2.800Q6.500-2.200 13 2.800L6.500 10.500z" fill="#fff" />
      <path d="M24 0v10.500H14z" fill="#8f76d0" />
      <path d="M19.500 4.700v5.800H14z" fill="#fff" />
      <path d="M32.500 0h2.500v1H37v9.500h-6.500V1h2z" fill="#fff" />
    </svg>
  </StatusBar>
);

const SystemNav = ({ short }: { short?: boolean }) => (
  <NavBar $short={short} aria-label="System">
    <NavButton aria-label="Back"><svg width="12" height="13" viewBox="0 0 12 13"><path d="M12 0v13L0 6.500z" fill="#9a9a9a" /></svg></NavButton>
    <NavButton aria-label="Home"><svg width="12" height="12" viewBox="0 0 12 12"><circle cx="6" cy="6" r="6" fill="#9a9a9a" /></svg></NavButton>
    <NavButton aria-label="Recents"><svg width="12" height="12" viewBox="0 0 12 12"><rect width="12" height="12" rx="1" fill="#9a9a9a" /></svg></NavButton>
  </NavBar>
);

/* ---------- day screens ---------- */

const Logo = () => (
  <svg width="153" height="43" viewBox="96 23 153 43" role="img" aria-label="Daily Road Map">
    <g fill="none" strokeWidth="2" strokeLinejoin="round">
      <path d="M100 51v-8l14-14h40" stroke="#16b4ea" />
      <path d="M100 51q4 0 6 3l7 6h39" stroke="#f3f01c" />
      <path d="M116 60v3" stroke="#f3f01c" strokeWidth="1.400" />
      <path d="M154 30q5 3 5 8v13q0 2-7 9M159 42h3" stroke="#0c0c14" />
      <path d="M152 60l6-6h29q3 0 6 6h8" stroke="#18c418" />
      <path d="M159 26l9 9h43l8-5h23q4 0 4 4v22q0 4-4 4h-41" stroke="#f02a1c" />
      <path d="M175 35v-2M192 35v-2M206 35v3M220 30v-2M229 30v-2M220 60v3M229 60v3M246 42h-3M246 52h-3" stroke="#f02a1c" strokeWidth="1.400" />
    </g>
    <g fill="#fff" stroke="#16161c" strokeWidth="1">
      <circle cx="100" cy="51.500" r="2.800" /><circle cx="154.300" cy="30" r="2.800" /><circle cx="158.700" cy="25.700" r="2.800" /><circle cx="152.300" cy="60" r="2.800" /><circle cx="201" cy="60" r="2.800" />
    </g>
    <g fill="#fff" fontFamily={narrow} fontSize="16" fontWeight="500">
      <text x="114" y="52">DAILY</text>
      <text x="163" y="52">ROAD</text>
      <text x="206" y="52">MAP</text>
    </g>
  </svg>
);

const DayHeader = styled.div`
  display: flex;
  justify-content: space-between;
  align-items: center;
  height: 73px;
  padding: 0 14px;
  font-family: ${narrow};
`;
const RoundButton = styled.button<{ $size: number }>`
  display: flex;
  flex-direction: column;
  align-items: center;
  justify-content: center;
  flex: none;
  width: ${(p) => p.$size}px;
  height: ${(p) => p.$size}px;
  border-radius: 50%;
  color: #fff;
  background: #3f6bcf;
`;
const TodayNumber = styled.span`
  font-size: 22px;
  line-height: 24px;
`;
const TodayLabel = styled.span`
  font-size: 7px;
  line-height: 12px;
`;
const DateBlock = styled.div`
  display: flex;
  flex-direction: column;
  align-items: center;
  color: #2a5bc0;
`;
const DateRow = styled.div`
  display: flex;
  align-items: center;
  gap: 14px;
`;
const DateTitle = styled.h1`
  margin: 0;
  font-size: 34px;
  font-weight: 400;
  line-height: 40px;
`;
const DateSubtitle = styled.p`
  margin: 0;
  font-size: 15px;
  font-weight: 300;
  line-height: 16px;
`;
const Board = styled.div`
  display: grid;
  justify-content: center;
  padding-top: 19px;
  > * { grid-area: 1 / 1; }
`;
const BoardContent = styled.div`
  display: flex;
  flex-direction: column;
  align-items: center;
  gap: 1px;
  padding-top: 63px;
`;
const BoardArea = styled.div`
  height: 247px;
  overflow: hidden;
`;
const EmptyText = styled.p`
  margin: 0;
  padding-top: 50px;
  color: #606060;
  font-family: ${narrow};
  font-size: 33px;
  font-weight: 400;
  line-height: 49px;
  text-align: center;
`;
const TaskList = styled.ul`
  display: flex;
  flex-direction: column;
  gap: 4px;
  width: 173px;
  margin: 0;
  padding: 0;
  list-style: none;
  mask-image: linear-gradient(#000 238px, transparent 247px);
`;
const TaskCard = styled.li`
  display: flex;
  align-items: center;
  justify-content: space-between;
  height: 41px;
  padding: 0 4px 0 2px;
  border: 1px solid #7c7c7c;
  border-right: 2px solid #5c5c5c;
  border-radius: 4px;
  background: linear-gradient(#f3f3f3 50%, #e6e4e2 50%, #e6e4e2 92%, #f8f8f8 92%);
`;
const TaskName = styled.h2<{ $color: string }>`
  margin: 0;
  color: ${(p) => p.$color};
  font-size: 14px;
  font-weight: 700;
  line-height: 20px;
`;
const TaskTimes = styled.p`
  display: flex;
  gap: 8px;
  margin: 0;
  color: #303030;
  font-size: 13px;
  line-height: 17px;
`;
const TaskIcon = styled.span`
  display: grid;
  place-items: center;
  width: 24px;
  height: 24px;
  border-radius: 50%;
  background: #f5f5f5;
`;

const tasks = [
  { name: 'Breakfast', color: '#dc0c16', from: '08:00 AM', to: '08:30 AM', icon: 'coffee' },
  { name: 'Work AM', color: '#1c2cb0', from: '09:00 AM', to: '12:30 PM', icon: 'bank' },
  { name: 'Lunch', color: '#fb960c', from: '12:30 PM', to: '01:30 PM', icon: 'salad' },
  { name: 'Work PM', color: '#0a820e', from: '01:30 PM', to: '05:30 PM', icon: 'bank' },
  { name: 'Gym', color: '#fb4c0c', from: '06:00 PM', to: '07:00 PM', icon: 'lifter' },
  { name: 'Dinner', color: '#000', from: '07:30 PM', to: '08:30 PM', icon: 'meat' },
];

const columnsX = [98.7, 148, 197.3, 246.6];
const rowsY = [243.4, 290.8, 338.2, 385.6, 433, 480.4];
const leftLabels = ['00', '11', '10', '9', '8', '7'];

const ringPath = 'M49.500 243V196H296V528H49.500V291';
const outlinePath = 'M49.500 243V196H296V528H49.500V314';
const tickPath =
  columnsX.map((x) => `M${x} 192v-8M${x} 532v8`).join('') +
  rowsY.map((y) => `M300 ${y}h8`).join('') +
  rowsY.slice(2).map((y) => `M45 ${y}h-7`).join('') +
  'M48 194l-6-6M297 194l6-6M48 530l-6 6M297 530l6 6';

const segments = [
  { d: 'M296 338.200V504.300', color: '#2c3eb4' },
  { d: 'M296 504.300V528H271.500', color: '#ecaa30' },
  { d: 'M271.500 528H74.200', color: '#128c1a' },
  { d: 'M296 290.800V314.500', color: '#e01212' },
  { d: 'M49.500 457V409.500', color: '#000' },
  { d: 'M49.500 409.500V314.500', color: '#e01212' },
  { d: 'M49.500 528V480.400', color: '#ff6600' },
];
const stops = [
  [296, 290.8], [296, 314.5], [296, 338.2], [296, 504.3], [271.5, 528], [74.2, 528],
  [49.5, 528], [49.5, 480.4], [49.5, 457], [49.5, 409.5], [49.5, 314.5],
];

const DayRing = ({ busy }: { busy?: boolean }) => (
  <svg width="345" height="405" viewBox="0 160 345 405" role="img" aria-label="Twenty-four hour map of the day">
    {busy && (
      <g fill="none" stroke="#5c5b80">
        <path d={tickPath} strokeWidth="8" />
        <path d={outlinePath} strokeWidth="14" />
      </g>
    )}
    <g fill="none" stroke="#bbb">
      <path d={tickPath} strokeWidth="6" />
      <path d="M45 290.800h-7" strokeWidth="6" />
      <path d={ringPath} strokeWidth={busy ? 12 : 10.5} />
      <path d="M64 243.400L49.500 291v4" strokeWidth="10.500" strokeLinejoin="round" />
      <path d="M49 243.400h15" strokeWidth="10" />
    </g>
    <circle cx="49" cy="243.400" r="9" fill="#bbb" />
    <circle cx="64" cy="243.400" r="9" fill="#bbb" />
    {busy && (
      <>
        <g fill="none" strokeWidth="12.500" strokeLinecap="round">
          {segments.map((s) => <path key={s.d} d={s.d} stroke={s.color} />)}
        </g>
        {stops.map(([x, y]) => <circle key={`${x}-${y}`} cx={x} cy={y} r="2.600" fill="#fff" />)}
        <path d="M51 333.500L58.500 315.500A9 9 0 1 1 69 326.600z" fill="#643c3c" stroke="#f1e6e6" strokeWidth=".8" />
        <circle cx="67" cy="317.200" r="4.500" fill="#fbee0c" stroke="#2e1a1a" />
      </>
    )}
    <g fill="#6b6898" fontFamily="Roboto, sans-serif" fontSize="14">
      <text x="32" y="184">1</text>
      <text x="303" y="186">6</text>
      <text x="34" y="551">6</text>
      <text x="303" y="550">1</text>
      {columnsX.map((x, i) => (
        <React.Fragment key={x}>
          <text x={x} y="181" textAnchor="middle">{i + 2}</text>
          <text x={x} y="556" textAnchor="middle">{5 - i}</text>
        </React.Fragment>
      ))}
      {rowsY.map((y, i) => (
        <React.Fragment key={y}>
          <text x="36" y={y + 5} textAnchor="end">{leftLabels[i]}</text>
          <text x="310" y={y + 5}>{i + 7}</text>
        </React.Fragment>
      ))}
    </g>
  </svg>
);

const Chevron = ({ next }: { next?: boolean }) => (
  <svg width="7" height="12" viewBox="0 0 7 12">
    <path d={next ? 'M1 1l5 5-5 5' : 'M6 1L1 6l5 5'} fill="none" stroke="#2450b4" strokeWidth="1.600" />
  </svg>
);

const DayScreen = ({ time, date, label, busy }: { time: string; date: string; label: string; busy?: boolean }) => (
  <Screen>
    <Status time={time} />
    <AppBar $centered><Logo /></AppBar>
    <Body>
      <DayHeader>
        <RoundButton $size={42}>
          <TodayNumber>27</TodayNumber>
          <TodayLabel>TODAY</TodayLabel>
        </RoundButton>
        <DateBlock>
          <DateRow>
            <button aria-label="Previous day"><Chevron /></button>
            <DateTitle>{date}</DateTitle>
            <button aria-label="Next day"><Chevron next /></button>
          </DateRow>
          <DateSubtitle>{label}</DateSubtitle>
        </DateBlock>
        <RoundButton $size={42} aria-label="Add task">
          <svg width="20" height="20" viewBox="0 0 20 20"><path d="M10 0v20M0 10h20" stroke="#fff" strokeWidth="2.500" /></svg>
        </RoundButton>
      </DayHeader>
      <Board>
        <DayRing busy={busy} />
        <BoardContent>
          <BoardArea>
            {busy ? (
              <TaskList>
                {tasks.map((t) => (
                  <TaskCard key={t.name}>
                    <div>
                      <TaskName $color={t.color}>{t.name}</TaskName>
                      <TaskTimes><span>{t.from}</span><span>{t.to}</span></TaskTimes>
                    </div>
                    <TaskIcon><Emoji name={t.icon} size={20} /></TaskIcon>
                  </TaskCard>
                ))}
              </TaskList>
            ) : (
              <EmptyText>NO EVENTS<br />TO DISPLAY</EmptyText>
            )}
          </BoardArea>
          <RoundButton $size={34} aria-label="Delete all">
            <svg width="16" height="20" viewBox="0 0 16 20">
              <path d="M0 1.500h5L6 0h4l1 1.500h5V3H0zM1 4h14v14q0 2-2 2H3q-2 0-2-2z" fill="#fff" />
              <text x="8" y="14" textAnchor="middle" fontFamily={narrow} fontSize="8" fontWeight="700" fill="#2f5fcb">ALL</text>
            </svg>
          </RoundButton>
        </BoardContent>
      </Board>
    </Body>
    <SystemNav />
  </Screen>
);

/* ---------- edit screens ---------- */

const BarTitle = styled.h1`
  flex: 1;
  margin: 0 0 0 28px;
  font-size: 17px;
  font-weight: 500;
  line-height: 20px;
`;
const Form = styled.form`
  display: flex;
  flex-direction: column;
  padding: 20px 17px 0;
  color: #2a5bc8;
  font-size: 16px;
`;
const Row = styled.div`
  display: flex;
  justify-content: space-between;
  padding-top: 9px;
`;
const Field = styled.input<{ $wide?: boolean; $right?: boolean }>`
  width: ${(p) => (p.$wide ? '100%' : '119px')};
  height: ${(p) => (p.$wide ? '25px' : '30px')};
  padding: ${(p) => (p.$wide ? '2px 0 0' : '5px 0 0')};
  border: 0;
  border-bottom: 1px solid #8c8c8c;
  outline: 0;
  background: none;
  color: inherit;
  font: inherit;
  font-size: 15px;
  line-height: 20px;
  text-align: ${(p) => (p.$right ? 'right' : 'left')};
`;
const IconRow = styled.div`
  display: flex;
  align-items: flex-start;
  gap: 5px;
  padding-top: 17px;
  line-height: 20px;
`;
const NoticeRow = styled.div`
  display: flex;
  align-items: center;
  gap: 8px;
  height: 44px;
  line-height: 20px;
`;
const Picker = styled.div`
  display: flex;
  flex-direction: column;
  align-items: center;
  width: 42px;
  color: #8c8c8c;
  font-size: 12px;
  line-height: 10px;
`;
const PickerValue = styled.input`
  width: 42px;
  height: 44px;
  margin: -5px 0;
  padding: 0;
  border: solid #a8a8a8;
  border-width: 1px 0;
  outline: 0;
  background: none;
  color: #111;
  font: 500 12px/16px Roboto, sans-serif;
  text-align: center;
`;
const Scrim = styled.div`
  position: absolute;
  inset: 21px 0 32px;
  background: rgba(0, 0, 0, 0.6);
`;
const Dialog = styled.div`
  position: absolute;
  top: 101px;
  left: 22px;
  right: 22px;
  display: flex;
  flex-direction: column;
  height: 400px;
  border-radius: 2px;
  background: #fff;
  box-shadow: 0 6px 14px rgba(0, 0, 0, 0.45);
`;
const IconGrid = styled.div`
  display: grid;
  grid-template-columns: repeat(8, 26px);
  justify-content: space-between;
  row-gap: 13px;
  padding: 7px 13px 0 0;
`;
const DialogAction = styled.button`
  align-self: flex-end;
  margin: 24px 22px 0;
  color: #2456c6;
  font-size: 12px;
  font-weight: 500;
  line-height: 16px;
`;

const EditForm = ({ id, name, from, to, icon }: { id: string; name: string; from: string; to: string; icon: string }) => (
  <>
    <AppBar>
      <button aria-label="Close"><MdClose size={19} /></button>
      <BarTitle>Edit task</BarTitle>
      <button aria-label="Save"><MdSave size={22} /></button>
    </AppBar>
    <Body>
      <Form>
        <Field $wide aria-label="Task name" defaultValue={name} />
        <Row>
          <Field aria-label="Start date" defaultValue="27/06/20" />
          <Field $right aria-label="Start time" defaultValue={from} />
        </Row>
        <Row>
          <Field aria-label="End date" defaultValue="27/06/20" />
          <Field $right aria-label="End time" defaultValue={to} />
        </Row>
        <IconRow>
          <span>Assign an icon:</span>
          <button type="button" aria-label="Choose icon"><Emoji name={icon} size={26} /></button>
        </IconRow>
        <NoticeRow>
          <label htmlFor={id}>Notification's notice (mins):</label>
          <Picker>
            <span>4</span>
            <PickerValue id={id} defaultValue="5" />
            <span>6</span>
          </Picker>
        </NoticeRow>
      </Form>
    </Body>
  </>
);

export default function App() {
  return (
    <>
      <GlobalStyle />
      <Page>
        <DayScreen time="10:01" date="28/06/20" label="Sunday, 28 June 2020" />
        <DayScreen time="10:06" date="27/06/20" label="Saturday, 27 June 2020" busy />
        <Screen>
          <Status time="10:06" />
          <EditForm id="notice-gym" name="Gym" from="06:00 PM" to="07:00 PM" icon="lifter" />
          <SystemNav short />
        </Screen>
        <Screen>
          <Status time="10:07" dim />
          <EditForm id="notice-lunch" name="Lunch" from="12:30 PM" to="01:30 PM" icon="salad" />
          <SystemNav short />
          <Scrim />
          <Dialog role="dialog" aria-label="Choose an icon">
            <IconGrid>
              {pickerIcons.map((name) => (
                <button key={name} type="button" aria-label={name}><Emoji name={name} size={26} /></button>
              ))}
            </IconGrid>
            <DialogAction type="button">BACK</DialogAction>
          </Dialog>
        </Screen>
      </Page>
    </>
  );
}
